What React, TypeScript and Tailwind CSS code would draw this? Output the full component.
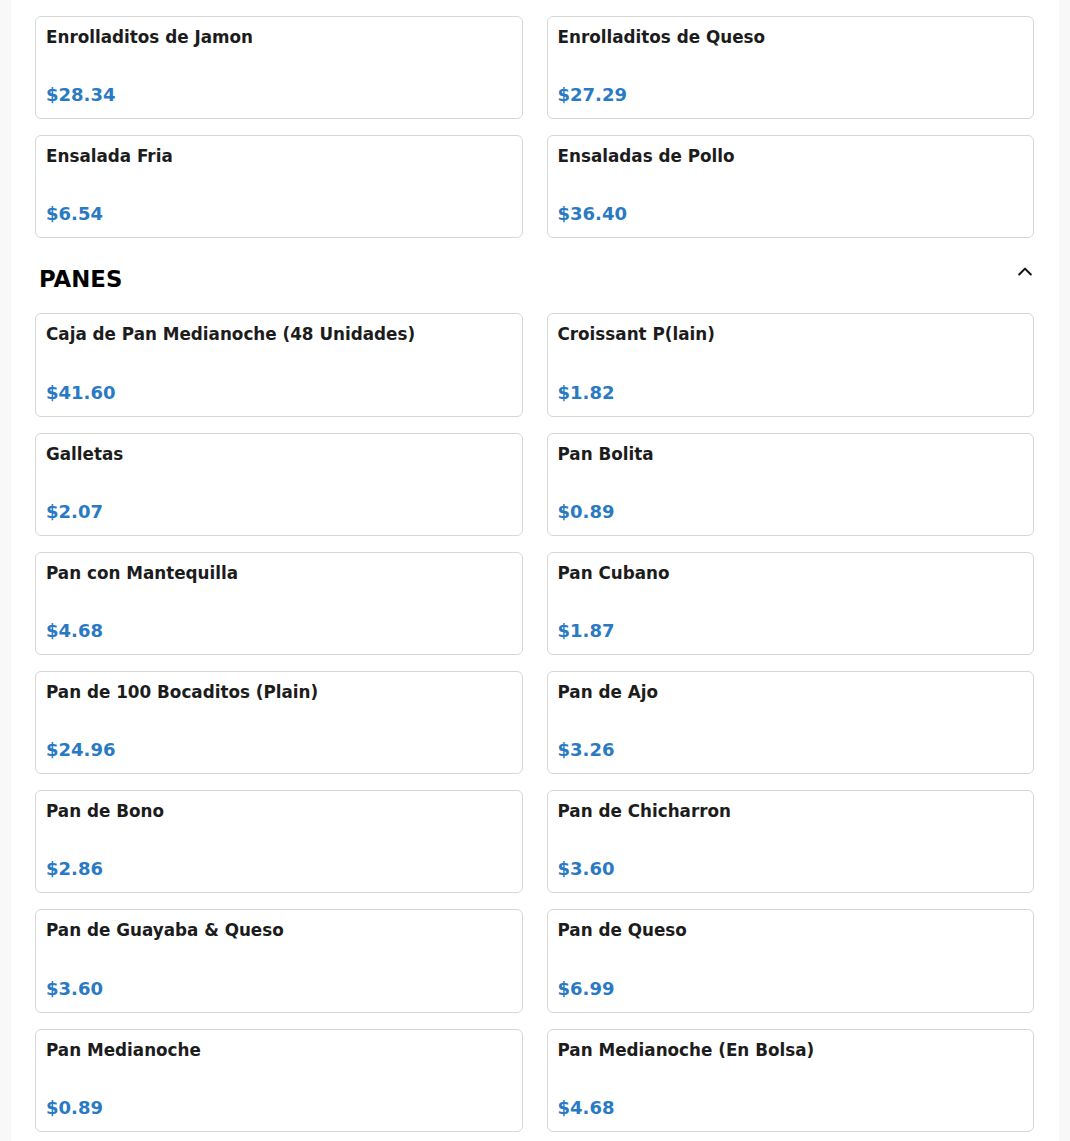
import React from "react";

type Item = { name: string; price: string };

const top: Item[] = [
  { name: "Enrolladitos de Jamon", price: "$28.34" },
  { name: "Enrolladitos de Queso", price: "$27.29" },
  { name: "Ensalada Fria", price: "$6.54" },
  { name: "Ensaladas de Pollo", price: "$36.40" },
];

const panes: Item[] = [
  { name: "Caja de Pan Medianoche (48 Unidades)", price: "$41.60" },
  { name: "Croissant P(lain)", price: "$1.82" },
  { name: "Galletas", price: "$2.07" },
  { name: "Pan Bolita", price: "$0.89" },
  { name: "Pan con Mantequilla", price: "$4.68" },
  { name: "Pan Cubano", price: "$1.87" },
  { name: "Pan de 100 Bocaditos (Plain)", price: "$24.96" },
  { name: "Pan de Ajo", price: "$3.26" },
  { name: "Pan de Bono", price: "$2.86" },
  { name: "Pan de Chicharron", price: "$3.60" },
  { name: "Pan de Guayaba & Queso", price: "$3.60" },
  { name: "Pan de Queso", price: "$6.99" },
  { name: "Pan Medianoche", price: "$0.89" },
  { name: "Pan Medianoche (En Bolsa)", price: "$4.68" },
];

function Card({ item }: { item: Item }) {
  return (
    <div className="flex h-[103.2px] flex-col justify-between rounded-md border border-[#d6d6d6] bg-white px-[10px] pt-[8px] pb-[9px]">
      <div className="text-[16.8px] font-bold leading-[24px] text-[#1c1c1c]">{item.name}</div>
      <div className="text-[18px] font-bold leading-[28px] text-[#2a7ac3]">{item.price}</div>
    </div>
  );
}

function Grid({ items }: { items: Item[] }) {
  return (
    <div className="grid grid-cols-2 gap-x-[24px] gap-y-[16px]">
      {items.map((it) => (
        <Card key={it.name} item={it} />
      ))}
    </div>
  );
}

export default function App() {
  return (
    <div
      className="min-h-[1141px] bg-[#f8f8f8]"
      style={{ fontFamily: '"DejaVu Sans", "Liberation Sans", sans-serif' }}
    >
      <div className="mx-[11px] min-h-[1141px] bg-white pl-[24px] pr-[25px] pt-[16px]">
        <Grid items={top} />
        <div className="flex h-[75px] items-start justify-between pl-[4px] pt-[26px]">
          <h2 className="text-[22.8px] font-bold leading-[30px] text-black">PANES</h2>
          <svg
            width="20"
            height="20"
            viewBox="0 0 24 24"
            fill="none"
            stroke="#111"
            strokeWidth="2.4"
            strokeLinecap="round"
            strokeLinejoin="round"
            className="mt-[-2px] mr-[-1px]"
          >
            <path d="M5 15l7-7 7 7" />
          </svg>
        </div>
        <Grid items={panes} />
      </div>
    </div>
  );
}
